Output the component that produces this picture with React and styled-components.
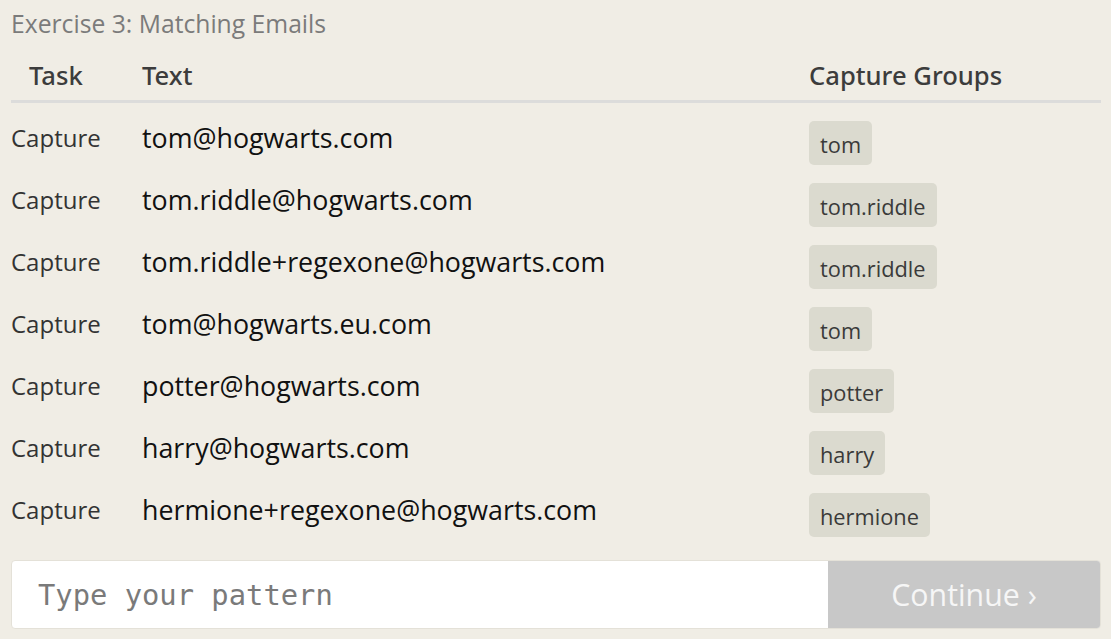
import React from 'react';
import styled, { createGlobalStyle } from 'styled-components';

const Global = createGlobalStyle`
  html, body {
    margin: 0;
    background: #f0ede5;
  }
  body {
    font-family: "Open Sans", "Noto Sans", sans-serif;
  }
`;

const Page = styled.div`
  padding: 0 10px 0 11px;
  width: 1090px;
`;

const Title = styled.div`
  font-size: 24.7px;
  line-height: 48px;
  color: #7b7b7b;
`;

const Table = styled.div`
  display: grid;
  grid-template-columns: 131px 667px 1fr;
`;

const Head = styled.div`
  font-family: "Noto Sans", sans-serif;
  font-weight: 500;
  font-size: 25.6px;
  line-height: 30px;
  color: #3c3c3c;
  padding: 13px 0 9px ${p => p.$indent || 0}px;
  border-bottom: 3px solid #dcdcdb;
`;

const Task = styled.div`
  font-size: 24px;
  line-height: 30px;
  color: #333;
  padding-top: 20px;
`;

const Email = styled.div`
  font-size: 26.8px;
  line-height: 30px;
  color: #111;
  padding-top: 20px;
`;

const GroupCell = styled.div`
  padding-top: 18px;
  display: flex;
  gap: 8px;
`;

const Chip = styled.span`
  display: inline-block;
  height: 44px;
  line-height: 48px;
  padding: 0 11px;
  font-size: 21.8px;
  color: #3a3a3a;
  background: #dbdacf;
  border-radius: 5px;
`;

const Entry = styled.div`
  margin-top: 23px;
  display: flex;
  height: 69px;
  box-sizing: border-box;
  border: 1px solid #e4e1d8;
  border-radius: 4px;
  background: #fff;
  overflow: hidden;
`;

const Pattern = styled.input`
  flex: 1;
  border: 0;
  outline: none;
  background: transparent;
  padding: 0 0 0 26px;
  font-family: "DejaVu Sans Mono", monospace;
  font-size: 28.8px;
  color: #333;
  &::placeholder {
    color: #7a7a7a;
  }
`;

const ContinueBtn = styled.button`
  width: 272px;
  border: 0;
  background: #c8c8c8;
  color: #f6f6f6;
  font-family: "Open Sans", sans-serif;
  font-size: 30.3px;
  padding: 0;
  cursor: default;
`;

const rows = [
  ['tom@hogwarts.com', 'tom'],
  ['tom.riddle@hogwarts.com', 'tom.riddle'],
  ['tom.riddle+regexone@hogwarts.com', 'tom.riddle'],
  ['tom@hogwarts.eu.com', 'tom'],
  ['potter@hogwarts.com', 'potter'],
  ['harry@hogwarts.com', 'harry'],
  ['hermione+regexone@hogwarts.com', 'hermione'],
];

export default function App() {
  return (
    <Page>
      <Global />
      <Title>Exercise 3: Matching Emails</Title>
      <Table>
        <Head $indent={18}>Task</Head>
        <Head>Text</Head>
        <Head>Capture Groups</Head>
        {rows.map(([text, group], i) => (
          <React.Fragment key={i}>
            <Task>Capture</Task>
            <Email>{text}</Email>
            <GroupCell><Chip>{group}</Chip></GroupCell>
          </React.Fragment>
        ))}
      </Table>
      <Entry>
        <Pattern placeholder="Type your pattern" />
        <ContinueBtn>Continue ›</ContinueBtn>
      </Entry>
    </Page>
  );
}
